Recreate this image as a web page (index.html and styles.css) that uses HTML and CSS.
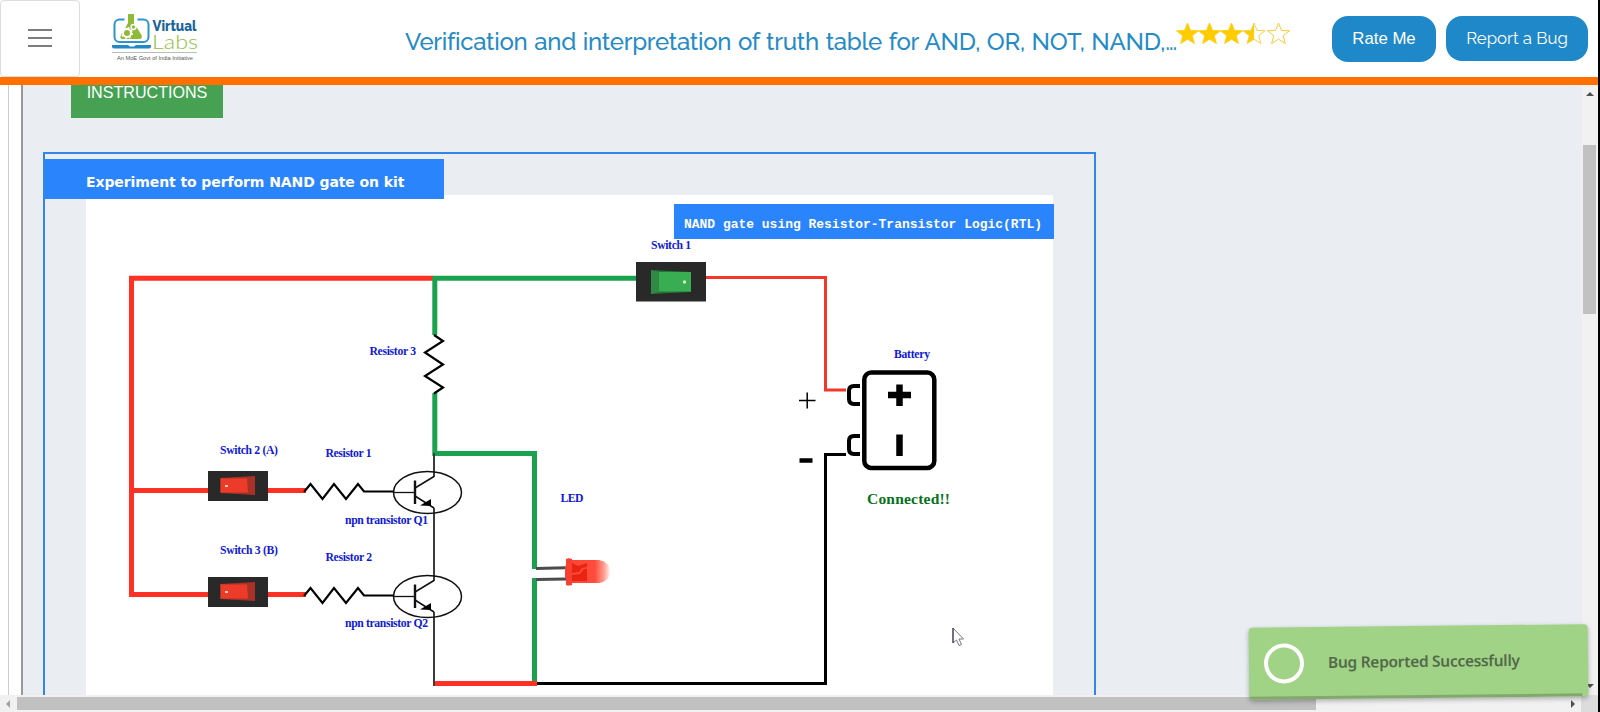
FILE: index.html
```html
<!DOCTYPE html>
<html lang="en">
<head>
<meta charset="utf-8">
<title>Virtual Labs</title>
<link rel="stylesheet" href="styles.css">
</head>
<body>
<div class="page">
  <header class="header">
    <div class="menu"><span></span><span></span><span></span></div>
    <svg class="logo" width="90" height="50" viewBox="110 12 90 50">
      <rect x="114.500" y="19.500" width="34" height="22.500" rx="5" fill="none" stroke="#2d94cc" stroke-width="2"/>
      <path d="M112 45h16l2 1.500h4l2-1.500h15v1.500q0 2-2 2h-35q-2 0-2-2z" fill="#2389c6"/>
      <path d="M124.500 13h13v10h-13z" fill="#fff"/>
      <path d="M128 14h6v9l7.500 12q1.500 4-2.500 4h-16q-4 0-2-4l7-12z" fill="#8fba38"/>
      <circle cx="127" cy="33" r="4" fill="none" stroke="#fff" stroke-width="2"/>
      <circle cx="127" cy="33" r="5.300" fill="none" stroke="#fff" stroke-width="1.400" stroke-dasharray="2 2.160"/>
      <circle cx="133.500" cy="27" r="2.400" fill="none" stroke="#fff" stroke-width="1.500"/>
      <text class="logo-top" x="152.500" y="31" textLength="44" lengthAdjust="spacingAndGlyphs">Virtual</text>
      <text class="logo-bottom" x="152" y="48.500" textLength="46" lengthAdjust="spacingAndGlyphs">Labs</text>
      <path d="M112 52.500h85" stroke="#bbb"/>
      <text class="logo-note" x="117" y="59.500" textLength="76" lengthAdjust="spacingAndGlyphs">An MoE Govt of India Initiative</text>
    </svg>
    <h1 class="title">Verification and interpretation of truth table for AND, OR, NOT, NAND,…</h1>
    <svg class="stars" width="116" height="26" viewBox="0 0 116 26">
      <defs>
        <path id="star" d="M0-11L3-3.600L11-3.200L4.700 1.700L6.900 9.500L0 5.200L-6.900 9.500L-4.700 1.700L-11-3.200L-3-3.600Z"/>
        <clipPath id="half"><path d="M-12-12h12v24h-12z"/></clipPath>
      </defs>
      <g fill="#fc0" stroke="#fc0" stroke-width=".8"><use href="#star" x="11.500" y="14"/><use href="#star" x="33.500" y="14"/><use href="#star" x="55.500" y="14"/></g>
      <g transform="translate(78 14)"><use href="#star" fill="#fc0" clip-path="url(#half)"/><use href="#star" fill="none" stroke="#fbd04a"/></g>
      <use href="#star" x="102.500" y="14" fill="none" stroke="#fbc93a"/>
    </svg>
    <div class="btn rate">Rate Me</div>
    <div class="btn report">Report a Bug</div>
  </header>
  <div class="body">
    <div class="gutter"></div>
    <main class="main">
      <div class="instructions"><span>INSTRUCTIONS</span></div>
      <section class="panel">
        <h2 class="panel-title">Experiment to perform NAND gate on kit</h2>
        <svg class="circuit" width="967" height="500" viewBox="86 195 967 500">
          <rect x="86" y="195" width="967" height="500" fill="#fff"/>
          <g fill="none" stroke="#ff3124" stroke-width="5">
            <path d="M433 278.300H131.500V594.500H306M131.500 490.500H306"/>
          </g>
          <g fill="none" stroke="#1ba24f" stroke-width="5">
            <path d="M637 278.300H434.800V335M434.800 393V453.500H534.500V569M534.500 578V682"/>
          </g>
          <path d="M705 277.500H825.500V390H846" fill="none" stroke="#f3372a" stroke-width="3"/>
          <path d="M537 683.500H825.500V454.500H846" fill="none" stroke="#000" stroke-width="3"/>
          <path d="M434 335l9 6-18 11.500 18 12-18 11.500 18 11.500-9 6" fill="none" stroke="#000" stroke-width="2.200"/>
          <defs>
            <g id="zigzag"><path d="M304 492l6.500-8 12 15 11.500-15 12 15 12-15 6 7.500h30" fill="none" stroke="#000" stroke-width="2.100"/></g>
            <g id="npn" fill="none" stroke="#111">
              <ellipse cx="427.500" cy="492.500" rx="34" ry="21" stroke-width="1.500"/>
              <path d="M393 492.500h22" stroke-width="1.300"/>
              <path d="M415 480.500v23.500" stroke-width="2.400"/>
              <path d="M415 488l19-11.500M415 496l19 12" stroke-width="1.500"/>
              <path d="M420 505.500l11-6.500v7z" fill="#000" stroke="none"/>
            </g>
            <g id="switch-off">
              <rect x="208" y="471" width="60" height="30" fill="#292929"/>
              <path d="M220 478l35-2v19l-35-2z" fill="#a93228"/>
              <path d="M221 478.500h26l1 14h-27z" fill="#ed3b29"/>
              <rect x="225" y="485" width="3" height="2" fill="#fbc8bd"/>
            </g>
          </defs>
          <use href="#zigzag"/><use href="#zigzag" y="104"/>
          <path d="M434 453v24M434 508v73M434 612v74" stroke="#3c3c3c" stroke-width="2"/>
          <use href="#npn"/><use href="#npn" y="104"/>
          <use href="#switch-off"/><use href="#switch-off" y="106"/>
          <path d="M435 683.500h102" stroke="#ff3124" stroke-width="5"/>
          <rect x="636" y="262" width="70" height="39.500" fill="#292929"/>
          <path d="M651 270l40 2v20l-40 2z" fill="#247437"/>
          <path d="M651 270l8 2v20l-8 2z" fill="#318a43"/>
          <rect x="659" y="272" width="32" height="19.500" fill="#38ad51"/>
          <circle cx="684.500" cy="282" r="1.700" fill="#cdf0c9"/>
          <g fill="none" stroke="#000">
            <rect x="864.300" y="372.500" width="70" height="95.500" rx="7" stroke-width="4.500"/>
            <path d="M860 386h-6q-5 0-5 5v8q0 5 5 5h6M860 436h-6q-5 0-5 5v8q0 5 5 5h6" stroke-width="4"/>
            <path d="M888 395h23M899.500 384.500v21.500M899.500 434.500v21.500" stroke-width="6.500"/>
            <path d="M799 400.500h16.500M807.200 392.500v16" stroke-width="1.500"/>
            <path d="M799.500 460.500h13" stroke-width="4.500"/>
          </g>
          <linearGradient id="led" x1="0" x2="1"><stop offset="0" stop-color="#fb4635"/><stop offset=".62" stop-color="#ff4b3c"/><stop offset=".85" stop-color="#ff9f92"/><stop offset="1" stop-color="#fff1ee"/></linearGradient>
          <path d="M536 568.500l30-.700M536 579.500l30-.500" stroke="#4c4c4c" stroke-width="3"/>
          <path d="M570 560h29q11 2 11 11.500t-11 11.500h-29z" fill="url(#led)"/>
          <path d="M566 559q3-1.500 6 0v26q-3 1-6 0v-6l-1-2v-10l1-2z" fill="#f64031"/>
          <path d="M572 563l6 3 9-3v4l-5 1-3 4-7 1zM572 575l8-1 4-5h3v12h-15z" fill="#e92413"/>
          <g class="label">
            <text x="651" y="249" textLength="40">Switch 1</text>
            <text x="369.500" y="354.500" textLength="46.500">Resistor 3</text>
            <text x="220" y="454" textLength="58">Switch 2 (A)</text>
            <text x="325.500" y="457" textLength="46">Resistor 1</text>
            <text x="345" y="524" textLength="83">npn transistor Q1</text>
            <text x="220" y="554" textLength="58">Switch 3 (B)</text>
            <text x="325.500" y="561" textLength="46.500">Resistor 2</text>
            <text x="345" y="627" textLength="83">npn transistor Q2</text>
            <text x="560.500" y="502" textLength="23">LED</text>
            <text x="894" y="357.500" textLength="36">Battery</text>
          </g>
          <text class="connected" x="867" y="504" textLength="83">Connected!!</text>
          <rect x="674" y="204" width="380" height="35" fill="#2a84fc"/>
          <text class="caption" x="684" y="228" textLength="358" lengthAdjust="spacingAndGlyphs">NAND gate using Resistor-Transistor Logic(RTL)</text>
        </svg>
      </section>
    </main>
    <div class="vscroll"><i class="up"></i><div class="vthumb"></div><i class="down"></i></div>
  </div>
  <div class="hscroll"><i class="left"></i><div class="hthumb"></div><i class="right"></i><div class="corner"></div></div>
</div>
<div class="edge"></div>
<svg class="cursor" width="13" height="20" viewBox="0 0 13 20"><path d="M1 1v15l3.500-3 2.500 5.500 2.500-1-2.500-5.500h4.500z" fill="#fff" stroke="#77778a"/><path d="M1 1v15" stroke="#222244"/></svg>
<div class="toast"><span class="ring"></span><span class="message">Bug Reported Successfully</span><div class="progress"></div></div>
</body>
</html>
```

FILE: styles.css
```css
* { box-sizing: border-box; }
body { margin: 0; width: 1600px; height: 712px; overflow: hidden; display: flex; background: #fff; font-family: "Liberation Sans", Arial, sans-serif; }
.page { width: 1598px; height: 712px; display: flex; flex-direction: column; }
.edge { width: 2px; background: #000; }
.header { height: 85px; flex: none; display: flex; align-items: flex-start; border-bottom: 8px solid #ff7000; background: #fff; }
.menu { width: 80px; height: 77px; flex: none; padding-bottom: 1px; border: 1px solid #ddd; border-radius: 4px; display: flex; flex-direction: column; align-items: center; justify-content: center; gap: 6px; }
.menu span { width: 24px; height: 2px; background: #7d7d7d; }
.logo { margin: 12px 0 0 30px; flex: none; overflow: visible; }
.logo-top { font: 800 15px Raleway, sans-serif; fill: #19649a; }
.logo-bottom { font: 300 19px Lato, sans-serif; fill: #91bd43; }
.logo-note { font: 5.5px "Liberation Sans", sans-serif; fill: #555; }
.title { margin: 25px 0 0 205px; width: 770px; flex: none; white-space: nowrap; font: 500 24px/34px Raleway, Lato, sans-serif; letter-spacing: -.28px; word-spacing: 1px; color: #258bc7; }
.stars { margin: 20px 0 0 1px; flex: none; }
.btn { flex: none; margin-top: 16px; border-radius: 16px; background: #1f88c9; color: #fff; font-size: 16.8px; text-align: center; }
.rate { width: 104px; height: 46px; line-height: 45px; margin-left: 40px; }
.report { width: 142px; height: 45px; line-height: 45px; margin-left: 10px; font-family: Raleway, Lato, sans-serif; }
.body { height: 610px; flex: none; display: flex; overflow: hidden; }
.gutter { width: 21px; border-left: 8px solid #fff; background: #fff; position: relative; box-shadow: inset 1px 0 #ccc; }
.main { width: 1561px; height: 610px; overflow: hidden; border-left: 2px solid #999; background: #eaeef3; }
.instructions { width: 152px; height: 33px; margin-left: 48px; background: #46a252; color: #fff; font-size: 16.1px; line-height: 14px; text-align: center; }
.panel { width: 1053px; height: 620px; margin: 34px 0 0 20px; border: 2px solid #3585e8; padding-top: 5px; display: flex; flex-direction: column; }
.panel-title { width: 399px; height: 40px; flex: none; margin: 0; padding-left: 41px; background: #2a84fc; color: #fff; font: bold 14px/46px "DejaVu Sans", Verdana, sans-serif; letter-spacing: -.09px; white-space: nowrap; z-index: 1; }
.circuit { margin: -4px 0 0 41px; flex: none; overflow: visible; }
.label { font: bold 11.7px "Liberation Serif", "Times New Roman", serif; fill: #1019d8; }
.connected { font: bold 15.5px "Liberation Serif", "Times New Roman", serif; fill: #08701b; }
.caption { font: bold 13px "Liberation Mono", "Courier New", monospace; fill: #fff; }
.vscroll { width: 16px; background: #f1f1f1; display: flex; flex-direction: column; align-items: center; }
.up { margin-top: 7px; border: 4px solid transparent; border-top: 0; border-bottom: 4px solid #505050; }
.vthumb { width: 13px; height: 169px; margin: 49px 1px 0 0; background: #c1c1c1; }
.down { margin-top: auto; margin-bottom: 7px; border: 4px solid transparent; border-bottom: 0; border-top: 4px solid #505050; }
.hscroll { height: 17px; background: #f1f1f1; display: flex; align-items: center; }
.left { margin-left: 6px; border: 4px solid transparent; border-left: 0; border-right: 4px solid #a3a3a3; }
.hthumb { width: 1299px; height: 13px; margin-left: 7px; background: #c1c1c1; }
.right { margin-left: auto; margin-right: 6px; border: 4px solid transparent; border-right: 0; border-left: 4px solid #505050; }
.corner { width: 17px; height: 17px; background: #dcdcdc; }
.cursor { position: absolute; left: 952px; top: 627px; }
.toast { position: absolute; left: 1249px; top: 626px; width: 339px; height: 72px; display: flex; align-items: center; border-radius: 4px; overflow: hidden; background: #a0d386; transform: rotate(-.6deg); box-shadow: 0 2px 5px rgba(0,0,0,.3); }
.ring { width: 40px; height: 40px; margin-left: 15px; border: 4px solid #fff; border-radius: 50%; }
.message { margin: -3px 0 0 24px; white-space: nowrap; font: 600 15.5px "Noto Sans", sans-serif; letter-spacing: -.3px; color: #54694a; }
.progress { position: absolute; left: 0; bottom: 0; width: 333px; height: 3px; background: #80a96b; }
```
